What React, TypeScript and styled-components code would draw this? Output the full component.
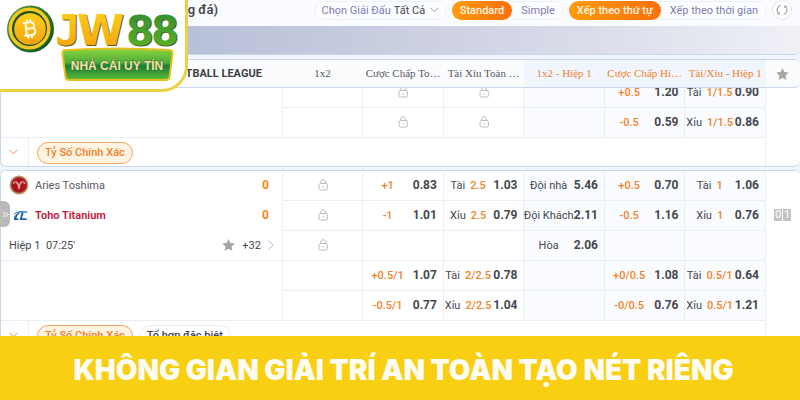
import React from "react";
import styled, { createGlobalStyle, css } from "styled-components";

const line = "#e9eef7";
const edge = "#c9d8ea";
const orange = "#f08228";

const Global = createGlobalStyle`
  *, *::before, *::after { box-sizing: border-box; }
  html, body, #root { height: 100%; }
  body { margin: 0; font-family: Roboto, "Noto Sans", sans-serif; font-size: 11px; color: #44474f; }
  button, select { font: inherit; color: inherit; }
`;

const Page = styled.div`
  position: relative;
  display: flex;
  flex-direction: column;
  height: 100vh;
  overflow: hidden;
  background: #f0f5fc;
`;

const Board = styled.main`
  flex: 1;
  min-height: 0;
  overflow: hidden;
`;

const Toolbar = styled.header`
  display: flex;
  align-items: flex-start;
  height: 26px;
  padding: 0 8px 0 0;
  background: #fafbfe;
`;

const Title = styled.h1`
  margin: 0;
  width: 218px;
  font-size: 13px;
  font-weight: 600;
  line-height: 20px;
  text-align: right;
  white-space: nowrap;
`;

const Controls = styled.div`
  display: flex;
  align-items: center;
  gap: 5px;
  margin-left: auto;
  white-space: nowrap;
`;

const LeagueFilter = styled.label`
  display: flex;
  align-items: center;
  height: 19px;
  padding: 0 7px;
  border: 1px solid #edf0f6;
  border-radius: 10px;
  background: #fcfdff;
  color: #7f7cb8;
`;

const LeagueSelect = styled.select`
  width: 36px;
  margin-left: 3px;
  padding: 0;
  border: 0;
  appearance: none;
  background: transparent;
  color: #44474f;
`;

const Segments = styled.div`
  display: flex;
  height: 19px;
  border: 1px solid #edf0f6;
  border-radius: 10px;
  background: #fcfdff;
`;

const Segment = styled.button<{ $active?: boolean }>`
  margin: -1px 0 -1px -1px;
  padding: ${(p) => (p.$active ? "0 8px" : "0 8px 0 10px")};
  border: 0;
  border-radius: 10px;
  line-height: 20px;
  background: ${(p) => (p.$active ? "linear-gradient(90deg, #ff9c0c, #fb6f0c)" : "transparent")};
  color: ${(p) => (p.$active ? "#fff6e4" : "#7f7cb0")};
  font-weight: ${(p) => (p.$active ? 500 : 400)};
`;

const RefreshButton = styled.button`
  display: grid;
  place-items: center;
  width: 20px;
  height: 20px;
  padding: 0;
  border: 1px solid #e6e8ee;
  border-radius: 50%;
  background: #fff;
`;

const PromoStrip = styled.div`
  height: 29px;
  margin-bottom: 4px;
  border-bottom: 1px solid ${edge};
  border-radius: 0 0 6px 0;
  background: linear-gradient(90deg, #aab5cf 0%, #b9c1d9 25%, #cdd1e2 55%, #dfe1ec 80%, #f0f1f7 100%);
`;

const Table = styled.table<{ $head?: boolean }>`
  display: block;
  margin-bottom: 3px;
  border: 1px solid ${edge};
  border-right-width: 0;
  border-radius: 6px;
  overflow: hidden;
  background: #fff;
  thead, tbody { display: block; }
  ${(p) =>
    p.$head &&
    css`
      position: relative;
      z-index: 1;
      margin-bottom: -11px;
      background: #fbfcfe;
    `}
`;

const Row = styled.tr`
  display: grid;
  grid-template-columns: 7fr repeat(6, minmax(0, 2fr)) 34px;
`;

const HeadCell = styled.th<{ $half?: boolean }>`
  height: 27px;
  padding: 0;
  border-right: 1px solid ${(p) => (p.$half ? "#f1f5fd" : "#fbfcfe")};
  background: ${(p) => (p.$half ? "#f1f5fd" : "transparent")};
  color: ${(p) => (p.$half ? orange : "#55585f")};
  font-family: "Liberation Serif", serif;
  font-size: 11px;
  font-weight: 400;
  line-height: 27px;
  white-space: nowrap;
`;

const LeagueCell = styled(HeadCell)`
  padding-right: 20px;
  color: #3b3e46;
  font-family: Roboto, sans-serif;
  font-weight: 700;
  text-align: right;
`;

const IconHeadCell = styled(HeadCell)`
  display: grid;
  place-items: center;
  border: 0;
`;

const Cell = styled.td<{ $half?: boolean }>`
  display: flex;
  align-items: center;
  justify-content: center;
  height: 30px;
  padding: 0 0 1px;
  border-right: 1px solid ${line};
  border-bottom: 1px solid ${line};
  background: ${(p) => (p.$half ? "#f9fbff" : "#fff")};
  white-space: nowrap;
`;

const OddsCell = styled(Cell)`
  padding-right: 6px;
`;

const Market = styled.span`
  display: flex;
  flex: 1;
  justify-content: center;
  gap: 5px;
  width: 0;
`;

const Handicap = styled.span`
  color: ${orange};
  font-weight: 500;
`;

const Price = styled.button`
  width: 25px;
  padding: 0;
  border: 0;
  background: none;
  font-size: 12px;
  font-weight: 700;
  display: flex;
  justify-content: flex-end;
`;

const InfoCell = styled(Cell)<{ $line?: boolean }>`
  justify-content: flex-start;
  padding: 0 13px 1px 8px;
  border-bottom-color: ${(p) => (p.$line ? line : "transparent")};
`;

const EndCell = styled(Cell)`
  border-color: transparent;
`;

const Team = styled.span<{ $lead?: boolean }>`
  margin-left: 6px;
  color: ${(p) => (p.$lead ? "#c0143c" : "#55585f")};
  font-weight: ${(p) => (p.$lead ? 600 : 400)};
`;

const Score = styled.strong`
  margin-left: auto;
  color: #f08a1c;
  font-size: 12px;
  font-weight: 700;
`;

const More = styled.button`
  display: flex;
  align-items: center;
  gap: 7px;
  margin: 0 -5px 0 auto;
  padding: 0;
  border: 0;
  background: none;
`;

const ScorePair = styled.span`
  display: flex;
  gap: 1px;
  color: #fff;
  line-height: 12px;
  text-align: center;
`;

const Digit = styled.span`
  width: 8px;
  background: #c2c2c2;
`;

const FootCell = styled.td`
  display: flex;
  grid-column: 1 / -2;
  height: 28px;
  padding: 0;
  border-right: 1px solid ${line};
`;

const Expand = styled.button`
  display: grid;
  place-items: center;
  width: 28px;
  padding: 0 2px 0 0;
  border: 0;
  border-right: 1px solid ${line};
  background: none;
`;

const Chips = styled.div`
  display: flex;
  align-items: center;
  gap: 6px;
  padding: 1px 8px 0;
`;

const Chip = styled.button<{ $on?: boolean }>`
  height: 22px;
  padding: 0 7px;
  border: 1px solid ${(p) => (p.$on ? "#f3a462" : "#eceef3")};
  border-radius: 11px;
  background: ${(p) => (p.$on ? "#fff3e2" : "#fff")};
  color: ${(p) => (p.$on ? orange : "#44474f")};
  font-weight: 500;
`;

const SideHandle = styled.button`
  position: absolute;
  top: 201px;
  left: 0;
  display: grid;
  place-items: center;
  width: 10px;
  height: 26px;
  padding: 0;
  border: 0;
  border-radius: 0 6px 6px 0;
  background: #b9b9b9;
  color: #fff;
`;

const BrandCard = styled.a`
  position: absolute;
  z-index: 2;
  top: 0;
  left: 0;
  width: 188px;
  height: 92px;
  border: solid #ecd047;
  border-width: 0 3px 3px 0;
  border-radius: 0 0 26px 0;
  background: #fff;
`;

const Banner = styled.footer`
  display: grid;
  place-items: center;
  height: 64px;
  background: #f9cf13;
`;

const Slogan = styled.p`
  margin: 0;
  padding: 4px 0 0 7px;
  color: #fffdf3;
  font-family: Inter, sans-serif;
  font-size: 28px;
  font-weight: 900;
  line-height: 32px;
  white-space: nowrap;
`;

const Lock = () => (
  <svg width="10" height="12" viewBox="0 0 10 12" fill="none" stroke="#bcbcbc" aria-label="Khóa">
    <rect x="1" y="4.5" width="8.4" height="6.5" rx="1.4" />
    <path d="M2.8 4.5V3a2.3 2.3 0 0 1 4.6 0v1.5M5.2 7v1.6" />
  </svg>
);

const Star = () => (
  <svg width="13" height="12" viewBox="0 0 13 12" fill="#a6a6a6" aria-hidden="true">
    <path d="M6.5 0l1.9 3.9 4.4.6-3.2 3 .8 4.4-3.9-2.1-3.9 2.1.8-4.4-3.2-3 4.4-.6z" />
  </svg>
);

const ChevronDown = ({ color }: { color: string }) => (
  <svg width="9" height="6" viewBox="0 0 9 6" fill="none" stroke={color} aria-hidden="true">
    <path d="M.6.8l3.9 4 3.9-4" />
  </svg>
);

const Refresh = () => (
  <svg width="12" height="12" viewBox="0 0 12 12" fill="none" stroke="#8e8e93" aria-hidden="true">
    <path d="M4.500 1.200A5 5 0 0 0 2.700 9.700M7.500 10.800A5 5 0 0 0 9.300 2.300M1.300 9.900l1.800.1.100-1.800M10.700 2.100l-1.800-.1-.1 1.800" />
  </svg>
);

const AriesCrest = () => (
  <svg width="20" height="20" viewBox="0 0 20 20" aria-hidden="true">
    <circle cx="10" cy="10" r="9.400" fill="#b99368" />
    <circle cx="10" cy="10" r="7.800" fill="#a8171f" />
    <path d="M4.500 9c0-3 4-3 4.500 0l1 5 1-5c.5-3 4.500-3 4.500 0M7.500 7.500l2.500 3 2.500-3" fill="none" stroke="#e3aaa0" strokeWidth="1.200" />
  </svg>
);

const TohoCrest = () => (
  <svg width="20" height="20" viewBox="0 0 20 20" aria-hidden="true">
    <path d="M4 10c3-4.500 9-4.500 14-3.500l.5 1.500c-5-.7-10-.8-14.500 2z" fill="#2a7fc0" />
    <path d="M11.500 7.500C7 8 4.500 11.500 5 15h4.500v-1.500H7.500c0-2 1.500-4.200 4-6z" fill="#1d5fa8" />
    <path d="M12.500 7.500h2.200l-1.700 5.700 5 .2-.3 1.600h-7z" fill="#1d5fa8" />
  </svg>
);

const BrandLogo = () => (
  <svg width="185" height="89" viewBox="0 0 185 89" role="img" aria-label="JW88 Nhà cái uy tín">
    <defs>
      <linearGradient id="gold" x1="0" y1="0" x2="0" y2="1">
        <stop offset="0" stopColor="#ffd21c" />
        <stop offset="1" stopColor="#f2a00c" />
      </linearGradient>
      <linearGradient id="leaf" x1="0" y1="0" x2="0" y2="1">
        <stop offset="0" stopColor="#2f8b35" />
        <stop offset="1" stopColor="#5fb524" />
      </linearGradient>
      <linearGradient id="plate" x1="0" y1="0" x2="0" y2="1">
        <stop offset="0" stopColor="#8bd43c" />
        <stop offset="0.450" stopColor="#4fae3c" />
        <stop offset="0.550" stopColor="#157c38" />
        <stop offset="1" stopColor="#5fbd35" />
      </linearGradient>
      <linearGradient id="rim" x1="0" y1="0" x2="1" y2="1">
        <stop offset="0" stopColor="#5f9c35" />
        <stop offset="1" stopColor="#0d4b22" />
      </linearGradient>
    </defs>
    <circle cx="30.500" cy="29" r="23.500" fill="url(#rim)" />
    <circle cx="29.500" cy="28.500" r="21" fill="#f3c822" />
    <circle cx="29.500" cy="28.500" r="17.500" fill="#23501d" />
    <circle cx="30" cy="29" r="15.800" fill="url(#gold)" />
    <path
      d="M23.500 22.500h7c4.500 0 5 5 2 6 4 1 3 6.800-1.700 6.800h-7.300M26 22.500v12.800M26 28.500h6M27.500 19.500v3M31 19.500v3M27.500 35.500v3M31 35.500v3"
      fill="none"
      stroke="#fffbe6"
      strokeWidth="2"
      transform="rotate(-6 29 28)"
    />
    <g fontFamily="DejaVu Sans, sans-serif" fontWeight="700">
      <g fill="#55611f">
        <text x="56" y="46" fontSize="42" fontFamily="DejaVu Sans Mono, monospace">J</text>
        <text x="78" y="46" fontSize="43">W</text>
        <text x="127 152" y="46" fontSize="40">88</text>
      </g>
      <g fill="url(#gold)">
        <text x="55" y="45" fontSize="42" fontFamily="DejaVu Sans Mono, monospace">J</text>
        <text x="77" y="45" fontSize="43">W</text>
      </g>
      <text x="126 151" y="45" fontSize="40" fill="url(#leaf)">88</text>
    </g>
    <path d="M66 50q53-3 103 0 4 0 3.500 4l-3 23q-.5 3-4 3H70q-4 0-4.500-3l-3-23q-.5-4 3.500-4z" fill="url(#plate)" stroke="#e6bf1f" strokeWidth="2" />
    <text x="117" y="70" textAnchor="middle" fontFamily="Liberation Sans, sans-serif" fontWeight="700" fontSize="12" fill="#f3e2a4" stroke="#3d6d2b" strokeWidth="1" paintOrder="stroke">
      NHÀ CÁI UY TÍN
    </text>
  </svg>
);

type Odds = "lock" | { label?: string; line?: string; price: string } | null;

const o = (price: string, line?: string, label?: string): Odds => ({ price, line, label });

const OddsCells = ({ items }: { items: Odds[] }) => (
  <>
    {items.map((item, i) => {
      const half = i > 2;
      if (item === null) return <Cell key={i} $half={half} />;
      if (item === "lock") return <Cell key={i} $half={half}><Lock /></Cell>;
      return (
        <OddsCell key={i} $half={half}>
          <Market>
            {item.label && <span>{item.label}</span>}
            {item.line && <Handicap>{item.line}</Handicap>}
          </Market>
          <Price>{item.price}</Price>
        </OddsCell>
      );
    })}
  </>
);

const FootRow = ({ chips }: { chips: string[] }) => (
  <Row>
    <FootCell>
      <Expand aria-label="Mở rộng"><ChevronDown color="#f08a4a" /></Expand>
      <Chips>
        {chips.map((name, i) => <Chip key={name} $on={i === 0}>{name}</Chip>)}
      </Chips>
    </FootCell>
  </Row>
);

export default function App() {
  return (
    <Page>
      <Global />
      <BrandCard href="#"><BrandLogo /></BrandCard>
      <Board>
        <Toolbar>
          <Title>(Bóng đá)</Title>
          <Controls>
            <LeagueFilter>
              Chọn Giải Đấu
              <LeagueSelect><option>Tất Cả</option></LeagueSelect>
              <ChevronDown color="#9a9ca6" />
            </LeagueFilter>
            <Segments>
              <Segment $active>Standard</Segment>
              <Segment>Simple</Segment>
            </Segments>
            <Segments>
              <Segment $active>Xếp theo thứ tự</Segment>
              <Segment>Xếp theo thời gian</Segment>
            </Segments>
            <RefreshButton aria-label="Làm mới"><Refresh /></RefreshButton>
          </Controls>
        </Toolbar>
        <PromoStrip />
        <Table $head>
          <thead>
            <Row>
              <LeagueCell>FOOTBALL LEAGUE</LeagueCell>
              <HeadCell>1x2</HeadCell>
              <HeadCell>Cược Chấp To…</HeadCell>
              <HeadCell>Tài Xỉu Toàn …</HeadCell>
              <HeadCell $half>1x2 - Hiệp 1</HeadCell>
              <HeadCell $half>Cược Chấp Hi…</HeadCell>
              <HeadCell $half>Tài/Xỉu - Hiệp 1</HeadCell>
              <IconHeadCell aria-label="Yêu thích"><Star /></IconHeadCell>
            </Row>
          </thead>
        </Table>
        <Table>
          <tbody>
            <Row>
              <InfoCell />
              <OddsCells items={[null, "lock", "lock", null, o("1.20", "+0.5"), o("0.90", "1/1.5", "Tài")]} />
              <EndCell />
            </Row>
            <Row>
              <InfoCell $line />
              <OddsCells items={[null, "lock", "lock", null, o("0.59", "-0.5"), o("0.86", "1/1.5", "Xỉu")]} />
              <EndCell />
            </Row>
            <FootRow chips={["Tỷ Số Chính Xác"]} />
          </tbody>
        </Table>
        <Table>
          <tbody>
            <Row>
              <InfoCell><AriesCrest /><Team>Aries Toshima</Team><Score>0</Score></InfoCell>
              <OddsCells items={["lock", o("0.83", "+1"), o("1.03", "2.5", "Tài"), o("5.46", undefined, "Đội nhà"), o("0.70", "+0.5"), o("1.06", "1", "Tài")]} />
              <EndCell />
            </Row>
            <Row>
              <InfoCell><TohoCrest /><Team $lead>Toho Titanium</Team><Score>0</Score></InfoCell>
              <OddsCells items={["lock", o("1.01", "-1"), o("0.79", "2.5", "Xỉu"), o("2.11", undefined, "Đội Khách"), o("1.16", "-0.5"), o("0.76", "1", "Xỉu")]} />
              <EndCell><ScorePair><Digit>0</Digit><Digit>1</Digit></ScorePair></EndCell>
            </Row>
            <Row>
              <InfoCell $line>
                Hiệp 1&nbsp; 07:25'
                <More><Star /> +32
                  <svg width="6" height="10" viewBox="0 0 6 10" fill="none" stroke="#b5b7bd" aria-hidden="true"><path d="M.8.6L5 5 .8 9.400" /></svg>
                </More>
              </InfoCell>
              <OddsCells items={["lock", null, null, o("2.06", undefined, "Hòa"), null, null]} />
              <EndCell />
            </Row>
            <Row>
              <InfoCell />
              <OddsCells items={[null, o("1.07", "+0.5/1"), o("0.78", "2/2.5", "Tài"), null, o("1.08", "+0/0.5"), o("0.64", "0.5/1", "Tài")]} />
              <EndCell />
            </Row>
            <Row>
              <InfoCell $line />
              <OddsCells items={[null, o("0.77", "-0.5/1"), o("1.04", "2/2.5", "Xỉu"), null, o("0.76", "-0/0.5"), o("1.21", "0.5/1", "Xỉu")]} />
              <EndCell />
            </Row>
            <FootRow chips={["Tỷ Số Chính Xác", "Tổ hợp đặc biệt"]} />
          </tbody>
        </Table>
      </Board>
      <SideHandle aria-label="Mở menu">
        <svg width="7" height="7" viewBox="0 0 7 7" fill="none" stroke="#fff" aria-hidden="true"><path d="M.8 1l2.500 2.500L.8 6M3.600 1l2.500 2.500L3.600 6" /></svg>
      </SideHandle>
      <Banner><Slogan>KHÔNG GIAN GIẢI TRÍ AN TOÀN TẠO NÉT RIÊNG</Slogan></Banner>
    </Page>
  );
}
